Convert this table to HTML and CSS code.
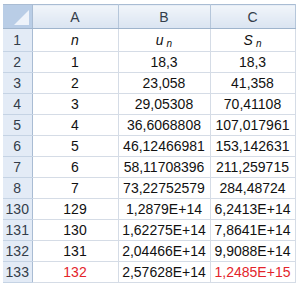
FILE: index.html
```html
<!DOCTYPE html>
<html lang="en">
<head>
    <meta charset="UTF-8">
    <title>Sheet</title>
    <link rel="stylesheet" href="styles.css">
</head>
<body>
    <div class="sheet">
        <table class="grid">
            <colgroup>
                <col class="c-row">
                <col class="c-a">
                <col class="c-b">
                <col class="c-c">
            </colgroup>
            <tr class="head">
                <th class="corner"><span class="tri"></span></th>
                <th>A</th>
                <th>B</th>
                <th>C</th>
            </tr>
            <tr class="r1">
                <th>1</th>
                <td><i>n</i></td>
                <td><i>u</i><sub>n</sub></td>
                <td><i>S</i><sub>n</sub></td>
            </tr>
            <tr class="r2"><th>2</th><td>1</td><td>18,3</td><td>18,3</td></tr>
            <tr><th>3</th><td>2</td><td>23,058</td><td>41,358</td></tr>
            <tr><th>4</th><td>3</td><td>29,05308</td><td>70,41108</td></tr>
            <tr><th>5</th><td>4</td><td>36,6068808</td><td>107,017961</td></tr>
            <tr><th>6</th><td>5</td><td>46,12466981</td><td>153,142631</td></tr>
            <tr><th>7</th><td>6</td><td>58,11708396</td><td>211,259715</td></tr>
            <tr><th>8</th><td>7</td><td>73,22752579</td><td>284,48724</td></tr>
            <tr><th>130</th><td>129</td><td>1,2879E+14</td><td>6,2413E+14</td></tr>
            <tr><th>131</th><td>130</td><td>1,62275E+14</td><td>7,8641E+14</td></tr>
            <tr><th>132</th><td>131</td><td>2,04466E+14</td><td>9,9088E+14</td></tr>
            <tr><th>133</th><td class="red">132</td><td>2,57628E+14</td><td class="red">1,2485E+15</td></tr>
        </table>
    </div>
</body>
</html>
```

FILE: styles.css
```css
* {
    margin: 0;
    padding: 0;
    box-sizing: border-box;
}

body {
    background: #fff;
    font-family: 'Liberation Sans', Arial, sans-serif;
    color: #111;
}

.sheet {
    padding: 4px 5px 0 3px;
}

.grid {
    border-collapse: collapse;
    table-layout: fixed;
    width: 292px;
    border-top: 1px solid #a9bcd3;
}

.c-row { width: 29px; }
.c-a { width: 86px; }
.c-b { width: 92px; }
.c-c { width: 85px; }

.grid th,
.grid td {
    height: 21px;
    text-align: center;
    font-size: 14px;
    font-weight: normal;
    white-space: nowrap;
    overflow: hidden;
}

.grid td {
    border-right: 1px solid #d5dce6;
    border-bottom: 1px solid #d5dce6;
}

.grid tr > th:first-child {
    background: #e3ebf6;
    color: #333d4a;
    border-right: 1px solid #a9bcd3;
    border-bottom: 1px solid #c5d3e4;
}

.head th {
    height: 24px;
    background: linear-gradient(#f1f5fa, #dae4f1);
    color: #333d4a;
    border-right: 1px solid #b5c6da;
    border-bottom: 1px solid #9fb4cc;
}

.grid .head th.corner {
    position: relative;
    background: #b9cde6;
    border-right: 1px solid #a9bcd3;
    border-bottom: 1px solid #9fb4cc;
}

.tri {
    position: absolute;
    right: 3px;
    bottom: 3px;
    width: 0;
    height: 0;
    border-left: 15px solid transparent;
    border-bottom: 15px solid #eef3fa;
}

.r1 th,
.r1 td {
    height: 23px;
}

.grid i {
    font-style: italic;
}

.grid sub {
    font-size: 10px;
    font-style: italic;
    margin-left: 3px;
    vertical-align: -2px;
}

.red {
    color: #e3242b;
}
```
